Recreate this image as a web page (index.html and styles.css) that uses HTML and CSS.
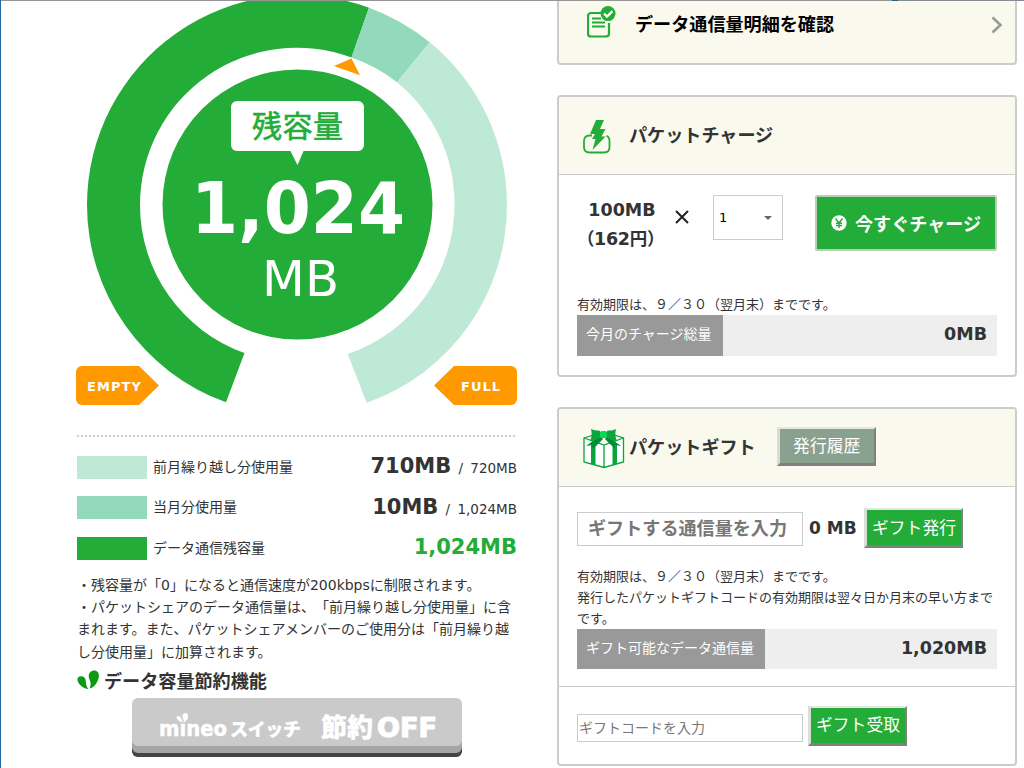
FILE: index.html
```html
<!DOCTYPE html>
<html lang="ja">
<head>
  <meta charset="UTF-8">
  <title>データ容量</title>
  <link rel="stylesheet" href="styles.css">
</head>
<body>

<div class="page">

  <div class="usage">
    <svg class="gauge" width="444" height="410" viewBox="75 0 444 410">
      <!-- ring -->
      <path fill="#24ac38" d="M226 402.3 A210 210 0 0 1 87 205 A210 210 0 0 1 369 7.8 L351.5 57.5 A157 157 0 0 0 140 205 A157 157 0 0 0 244.5 353Z"/>
      <path fill="#92dabb" d="M369 7.8 A210 210 0 0 1 429.7 42.3 L397 82.2 A157 157 0 0 0 351.5 57.5Z"/>
      <path fill="#bee9d6" d="M429.7 42.3 A210 210 0 0 1 507 205 A210 210 0 0 1 366.7 402.8 L347.7 354 A157 157 0 0 0 454.500 205 A157 157 0 0 0 397 82.2Z"/>
      <circle cx="297.5" cy="204.5" r="135" fill="#24ac38"/>
      <path fill="#ff9900" d="M334 66 L351.5 58.5 L360 75.2Z"/>
      <!-- balloon -->
      <rect x="231" y="101" width="133" height="50" rx="6" fill="#fff"/>
      <path fill="#fff" d="M290 150h14l-6.500 15z"/>
      <text class="gauge-label" x="252" y="136.500" textLength="91">残容量</text>
      <text class="gauge-num" x="191" y="233" textLength="214" lengthAdjust="spacingAndGlyphs">1,024</text>
      <text class="gauge-unit" x="262" y="296" textLength="77" lengthAdjust="spacingAndGlyphs">MB</text>
      <!-- tags -->
      <path fill="#ff9900" d="M82 366H139L159 385.500L139 405H82a6 6 0 0 1-6-6V372a6 6 0 0 1 6-6z"/>
      <path fill="#ff9900" d="M511 366H454L434 385.500L454 405H511a6 6 0 0 0 6-6V372a6 6 0 0 0-6-6z"/>
      <text class="gauge-tag" x="87" y="391" textLength="54">EMPTY</text>
      <text class="gauge-tag" x="461" y="391" textLength="39">FULL</text>
    </svg>

    <ul class="legend">
      <li><span class="color prev"></span><span class="name">前月繰り越し分使用量</span><span class="val"><b>710MB</b> / 720MB</span></li>
      <li><span class="color cur"></span><span class="name">当月分使用量</span><span class="val"><b>10MB</b> / 1,024MB</span></li>
      <li><span class="color rest"></span><span class="name">データ通信残容量</span><span class="val total"><b>1,024MB</b></span></li>
    </ul>

    <p class="notes">・残容量が「0」になると通信速度が200kbpsに制限されます。<br>
      ・パケットシェアのデータ通信量は、「前月繰り越し分使用量」に含<br>
      まれます。また、パケットシェアメンバーのご使用分は「前月繰り越<br>
      し分使用量」に加算されます。</p>

    <h3 class="saving">
      <svg width="22" height="20" viewBox="0 0 22 20">
        <path fill="#0a9a14" d="M12.500 18.500C14 15 14 12.500 12.500 9.500C10.500 5.500 12.500 1 16.500 .5C20.500 0 22.500 3.500 21.800 7C21 12 17.500 17.500 12.500 18.500Z"/>
        <path fill="#0a9a14" d="M11.300 19C6 18.500 1.500 14.500 .5 10.500C0 8 1.500 6.200 4 6.200C6.500 6.200 8.700 8.200 8.800 11C9 13.500 9 16.500 11.300 19Z"/>
      </svg>
      <span>データ容量節約機能</span>
    </h3>

    <a class="switch" href="#">
      <svg width="330" height="48" viewBox="0 0 330 48">
        <text class="sw-mineo" x="27" y="38" textLength="68" lengthAdjust="spacingAndGlyphs">mıneo</text>
        <path fill="#fff" d="M51.500 25C52.500 22 50.500 20.500 50.500 18.500C50.500 16 52 14.500 54 15C57.500 16 57 22 51.500 25Z M50.500 24.500C46.500 23.500 44.500 21 44.500 19C46 17 49.500 18 50.500 24.500Z"/>
        <text class="sw-kana" x="98" y="38" textLength="71">スイッチ</text>
        <text class="sw-kanji" x="189" y="38.500" textLength="52">節約</text>
        <text class="sw-off" x="245" y="38.500" textLength="60" lengthAdjust="spacingAndGlyphs">OFF</text>
      </svg>
    </a>
  </div>

  <div class="side">

    <a class="panel detail-link" href="#">
      <svg width="30" height="34" viewBox="0 0 30 34" fill="none" stroke="#24ac38">
        <path stroke-width="2.200" d="M15 7H4a3 3 0 0 0-3 3V27.500a3 3 0 0 0 3 3H19a3 3 0 0 0 3-3V17"/>
        <path stroke-width="2" d="M5 12.500H14M5 16.500H18M5 20.500H18"/>
        <circle cx="21" cy="7.600" r="7.500" fill="#24ac38" stroke="none"/>
        <path stroke="#fff" stroke-width="2.200" d="M17 7.600L20 10.600L25.500 5.100"/>
      </svg>
      <span>データ通信量明細を確認</span>
      <svg class="arrow" width="12" height="18" viewBox="0 0 12 18"><path fill="none" stroke="#999" stroke-width="2.600" d="M1.500 1.500L9.500 9L1.500 16.500"/></svg>
    </a>

    <section class="panel charge">
      <h2 class="panel-head">
        <svg width="28" height="34" viewBox="0 0 28 34">
          <path fill="none" stroke="#24ac38" stroke-width="1.800" d="M9 15.500H6.500C3 15.500 1 17.500 1 21V27C1 30.500 3 32.500 6.500 32.500H21C24.500 32.500 26.500 30.500 26.500 27V21C26.500 18 25.500 16.500 23.500 15.800"/>
          <path fill="#24ac38" d="M13 0H21L17 9H22.500L18.500 16.500H22.500L9.500 30L12.500 19H9L12 14H7Z"/>
        </svg>
        <span>パケットチャージ</span>
      </h2>
      <div class="charge-row">
        <p class="price">100MB<br><span>（162円）</span></p>
        <svg class="times" width="14" height="14" viewBox="0 0 14 14"><path stroke="#222" stroke-width="2" d="M1 1L13 13M13 1L1 13"/></svg>
        <div class="select"><span>1</span><i></i></div>
        <button class="btn-charge">
          <svg width="16" height="16" viewBox="0 0 16 16"><circle cx="8" cy="8" r="7.700" fill="#fff"/><path fill="none" stroke="#24ac38" stroke-width="1.400" d="M4.500 3.500L8 8L11.500 3.500M8 8V13M5 8.200H11M5 10.500H11"/></svg>
          <span>今すぐチャージ</span>
        </button>
      </div>
      <p class="limit">有効期限は、９／３０（翌月末）までです。</p>
      <div class="total-bar"><span class="label">今月のチャージ総量</span><b>0MB</b></div>
    </section>

    <section class="panel gift">
      <h2 class="panel-head">
        <svg class="gift-icon" width="42" height="40" viewBox="0 0 42 40">
          <path fill="#fff" stroke="#0aa53c" stroke-width="1.300" d="M1 9L21 3L40.500 9V33L21 38.500L1 33ZM21 16V38.500M1 9L21 16L40.500 9"/>
          <path fill="#0aa53c" d="M8 15L12.500 18V36.500L8 35ZM29.500 18L34 15V35L29.500 36.500Z"/>
          <path fill="#008b35" d="M17 7L3 17L9 16L10 20L20 10ZM24 7L38 17L32 16L32 20L22 10Z"/>
          <path fill="#0aa53c" d="M8 0C12 2 15 1 17 2V9C13 9 11 13 7 12C9 8 9 4 8 0ZM33 0C30 2 26 1 24 2V9C28 9 30 13 34 12C32 8 32 4 33 0Z"/>
          <rect x="17" y="2" width="7" height="7" rx="2" fill="#08d855"/>
        </svg>
        <span>パケットギフト</span>
        <button class="btn history">発行履歴</button>
      </h2>
      <div class="form-row issue">
        <input class="amount" type="text" placeholder="ギフトする通信量を入力">
        <b>0 MB</b>
        <button class="btn">ギフト発行</button>
      </div>
      <p class="limit">有効期限は、９／３０（翌月末）までです。<br>発行したパケットギフトコードの有効期限は翌々日か月末の早い方まで<br>です。</p>
      <div class="total-bar"><span class="label">ギフト可能なデータ通信量</span><b>1,020MB</b></div>
      <div class="form-row receive">
        <input class="code" type="text" placeholder="ギフトコードを入力">
        <button class="btn">ギフト受取</button>
      </div>
    </section>

  </div>
</div>

</body>
</html>
```
FILE: styles.css
```css
* {
  box-sizing: border-box;
}

body {
  margin: 0;
  background: #fff;
  color: #333;
  font-family: "DejaVu Sans", "Noto Sans CJK JP", sans-serif;
  font-size: 14px;
  text-spacing-trim: space-all;
}

h2, h3, p, ul {
  margin: 0;
  padding: 0;
}

input, button {
  font-family: inherit;
  margin: 0;
}

.page {
  position: relative;
  display: flex;
  width: 1024px;
  height: 768px;
  padding-left: 74px;
  border-left: 1px solid #1c6ea4;
  overflow: hidden;
}

/* frame line over the top edge */
.page::before {
  content: "";
  position: absolute;
  top: 0;
  left: 0;
  right: 0;
  height: 1px;
  background: linear-gradient(to right, #969396 891px, #2f6088 891px, #2f6088 897px, #858b93 897px);
}

.usage {
  width: 444px;
  padding: 0 2px;
}

/* gauge */
.gauge {
  display: block;
  margin-left: -2px;
}

.gauge-label {
  font-size: 30px;
  fill: #24ac38;
  stroke: #24ac38;
  stroke-width: .6px;
}

.gauge-num {
  font-size: 71px;
  font-weight: bold;
  fill: #fff;
}

.gauge-unit {
  font-size: 50px;
  fill: #fff;
}

.gauge-tag {
  font-size: 13px;
  font-weight: bold;
  fill: #fff;
}

/* legend */
.legend {
  width: 438px;
  margin-top: 25px;
  padding-top: 10px;
  border-top: 2px dotted #ccc;
  list-style: none;
}

.legend li {
  display: flex;
  align-items: center;
  width: 440px;
  height: 40.5px;
}

.color {
  width: 70px;
  height: 23px;
  margin-right: 6px;
}

.prev {
  background: #bee9d6;
}

.cur {
  background: #92dabb;
}

.rest {
  background: #24ac38;
}

.name {
  padding-bottom: 3px;
}

.val {
  margin-left: auto;
  padding-bottom: 2px;
  font-size: 13.5px;
  word-spacing: 3px;
}

.val b {
  font-size: 21px;
}

.total {
  color: #24ac38;
}

.notes {
  margin-top: 5px;
  line-height: 22.4px;
  white-space: nowrap;
}

.saving {
  display: flex;
  align-items: center;
  gap: 5px;
  height: 35px;
  padding-top: 3px;
  font-size: 18.1px;
  line-height: 28px;
}

.saving svg {
  margin-top: -4px;
}

.switch {
  display: block;
  width: 330px;
  height: 59px;
  margin-left: 55px;
  background: #cacaca;
  border-radius: 6px;
  box-shadow: inset 0 -4px #454545, inset 0 -11px #a6a6a6;
}

.switch svg {
  display: block;
}

.switch text {
  fill: #fff;
  stroke: #fff;
  stroke-linejoin: round;
  font-weight: 900;
}

.switch .sw-mineo {
  font-size: 22px;
  stroke-width: .5px;
}

.switch .sw-kana {
  font-size: 18px;
  stroke-width: .3px;
}

.switch .sw-kanji {
  font-size: 26px;
  stroke-width: .3px;
}

.switch .sw-off {
  font-size: 27px;
  stroke-width: 1.2px;
}

/* right column */
.side {
  width: 460px;
  margin-left: 38px;
}

.panel {
  display: block;
  border: 2px solid #ccc;
  border-radius: 4px;
}

.detail-link {
  display: flex;
  align-items: center;
  height: 85px;
  margin-top: -20px;
  padding: 0 12px 0 28px;
  background: #f9f9ee;
  color: #000;
  font-size: 18.1px;
  font-weight: bold;
  text-decoration: none;
}

.detail-link span {
  margin-left: 18px;
}

.arrow {
  margin: 4px 0 0 auto;
}

.panel-head {
  display: flex;
  align-items: center;
  height: 78px;
  padding-left: 24px;
  background: #f9f9ee;
  border-bottom: 1px solid #ccc;
  border-radius: 2px 2px 0 0;
  font-size: 18.1px;
}

.panel-head span {
  padding-bottom: 3px;
}

.charge {
  height: 282px;
  margin-top: 30px;
}

.charge .panel-head span {
  margin-left: 18px;
}

.charge .panel-head svg {
  margin-top: 3px;
}

.charge-row {
  display: flex;
  height: 119px;
  padding: 20px 18px 0 24px;
}

.price {
  width: 78px;
  padding-top: 1px;
  font-size: 17.5px;
  font-weight: bold;
  line-height: 29px;
  text-align: center;
  white-space: nowrap;
}

.price span {
  margin: 0 -5px 0 -8px;
  letter-spacing: -.3px;
}

.times {
  margin: 15px 0 0 14px;
}

.select {
  display: flex;
  align-items: center;
  justify-content: space-between;
  width: 70px;
  height: 45px;
  margin-left: 24px;
  padding: 0 10px 0 5px;
  border: 1px solid #ccc;
  color: #000;
  font-size: 13px;
}

.select i {
  border: 4px solid transparent;
  border-top-color: #666;
  border-bottom: 0;
}

.btn-charge {
  display: flex;
  align-items: center;
  gap: 8px;
  width: 182px;
  height: 56px;
  margin-left: auto;
  padding: 0 0 1px 14px;
  background: #24ac38;
  border: 2px solid #b9cdb9;
  border-radius: 2px;
  color: #fff;
  font-size: 18.1px;
  font-weight: bold;
  white-space: nowrap;
}

.limit {
  margin-left: 18px;
  font-size: 13px;
  line-height: 21px;
  white-space: nowrap;
}

.total-bar {
  display: flex;
  height: 40px;
  margin: 0 18px;
  padding-right: 10px;
  background: #eee;
  justify-content: space-between;
  line-height: 39px;
}

.total-bar .label {
  padding: 0 11px 0 9px;
  background: #999;
  color: #fff;
}

.total-bar b {
  font-size: 17.5px;
}

.charge .total-bar {
  height: 41px;
}

.gift {
  height: 359px;
  margin-top: 30px;
}

.gift .panel-head span {
  margin-left: 4px;
}

.gift-icon {
  margin-top: 2px;
}

.btn {
  width: 99px;
  height: 40px;
  padding: 0;
  background: #24ac38;
  border: solid;
  border-width: 2px 2px 3px 3px;
  border-color: #e0e8e0 #808080 #808080 #d8ddd8;
  color: #fff;
  font-size: 16.8px;
  line-height: 30px;
  white-space: nowrap;
}

.history {
  height: 39px;
  margin: -2px 0 0 21px;
  background: #8aa18f;
}

.form-row {
  display: flex;
  align-items: center;
  padding-left: 18px;
}

.issue {
  height: 79px;
  padding-top: 3px;
}

.form-row input {
  width: 226px;
  border: 1px solid #ccc;
}

.form-row input::placeholder {
  color: #777;
  opacity: 1;
}

.form-row .amount {
  height: 34px;
  margin-top: 1px;
  padding: 0 10px;
  font-size: 18.1px;
  font-weight: bold;
}

.issue b {
  width: 61px;
  padding-left: 6px;
  font-size: 17px;
  white-space: nowrap;
}

.form-row .code {
  height: 28px;
  margin: 5px 5px 0 0;
  padding: 0 1px;
  font-size: 14px;
}

.gift .total-bar {
  margin-bottom: 17px;
}

.receive {
  height: 78px;
  border-top: 1px solid #ccc;
}
```
